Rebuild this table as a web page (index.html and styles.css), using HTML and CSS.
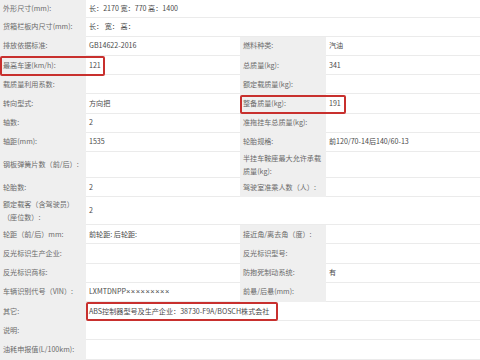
FILE: index.html
```html
<!DOCTYPE html>
<html lang="zh">
<head>
<meta charset="utf-8">
<title>车辆参数</title>
<link rel="stylesheet" href="styles.css">
</head>
<body>
<div class="sheet">
  <div class="grid">
    <div class="l">外形尺寸(mm):</div><div class="v span3">长：2170 宽：770 高：1400</div>
    <div class="l">货箱栏板内尺寸(mm):</div><div class="v span3">长：&nbsp;宽：&nbsp;高：</div>
    <div class="l">排放依据标准:</div><div class="v">GB14622-2016</div><div class="l">燃料种类:</div><div class="v">汽油</div>
    <div class="l">最高车速(km/h):</div><div class="v">121</div><div class="l">总质量(kg):</div><div class="v">341</div>
    <div class="l">载质量利用系数:</div><div class="v"></div><div class="l">额定载质量(kg):</div><div class="v"></div>
    <div class="l">转向型式:</div><div class="v">方向把</div><div class="l">整备质量(kg):</div><div class="v">191</div>
    <div class="l">轴数:</div><div class="v">2</div><div class="l">准拖挂车总质量(kg):</div><div class="v"></div>
    <div class="l">轴距(mm):</div><div class="v">1535</div><div class="l">轮胎规格:</div><div class="v">前120/70-14后140/60-13</div>
    <div class="l nowrap">钢板弹簧片数（前/后）:</div><div class="v"></div><div class="l">半挂车鞍座最大允许承载质量(kg):</div><div class="v"></div>
    <div class="l">轮胎数:</div><div class="v">2</div><div class="l">驾驶室准乘人数（人）:</div><div class="v"></div>
    <div class="l">额定载客（含驾驶员）（座位数）:</div><div class="v span3">2</div>
    <div class="l">轮距（前/后）mm:</div><div class="v">前轮距: 后轮距:</div><div class="l">接近角/离去角（度）:</div><div class="v"></div>
    <div class="l">反光标识生产企业:</div><div class="v"></div><div class="l">反光标识型号:</div><div class="v"></div>
    <div class="l">反光标识商标:</div><div class="v"></div><div class="l">防抱死制动系统:</div><div class="v">有</div>
    <div class="l">车辆识别代号（VIN）:</div><div class="v">LXMTDNPP<span class="mask">×××××××××</span></div><div class="l">前悬/后悬(mm):</div><div class="v"></div>
    <div class="l">其它:</div><div class="v span3">ABS控制器型号及生产企业：38730-F9A/BOSCH株式会社</div>
    <div class="l">说明:</div><div class="v span3"></div>
    <div class="l">油耗申报值(L/100km):</div><div class="v span3"></div>
  </div>
  <div class="mark mark-speed"></div>
  <div class="mark mark-weight"></div>
  <div class="mark mark-abs"></div>
</div>
</body>
</html>
```
FILE: styles.css
```css
html, body {
  margin: 0;
  padding: 0;
  background: #ffffff;
}
body {
  font-family: "Noto Sans CJK SC", "Noto Sans", sans-serif;
  font-size: 7.1px;
  color: #555555;
}
.sheet {
  position: relative;
  width: 480px;
  height: 360px;
  overflow: hidden;
}
.grid {
  display: grid;
  grid-template-columns: 86px 154px 86px 154px;
  grid-template-rows: 17.7px repeat(7, 19.2px) 26px 19.2px 28px repeat(7, 19.2px);
}
.l, .v {
  box-sizing: border-box;
  display: flex;
  align-items: center;
  padding: 0 3px;
  border-bottom: 1px solid #ebebeb;
  line-height: 13px;
}
.l {
  background: #efefef;
  border-bottom-color: #efefef;
  color: #6a6a6a;
}
.v {
  background: #ffffff;
  color: #4a4a4a;
  padding-left: 3px;
}
.nowrap {
  white-space: nowrap;
}
.mask {
  font-family: "Liberation Sans", sans-serif;
  font-size: 7.5px;
  letter-spacing: 0.5px;
}
.span3 {
  grid-column: span 3;
}
.mark {
  position: absolute;
  box-sizing: border-box;
  border: 2px solid #c8302e;
  border-radius: 2px;
}
.mark-speed {
  left: 0;
  top: 55.5px;
  width: 105px;
  height: 20.5px;
}
.mark-weight {
  left: 240px;
  top: 95px;
  width: 106px;
  height: 19px;
}
.mark-abs {
  left: 86px;
  top: 302px;
  width: 192px;
  height: 19px;
}
```
